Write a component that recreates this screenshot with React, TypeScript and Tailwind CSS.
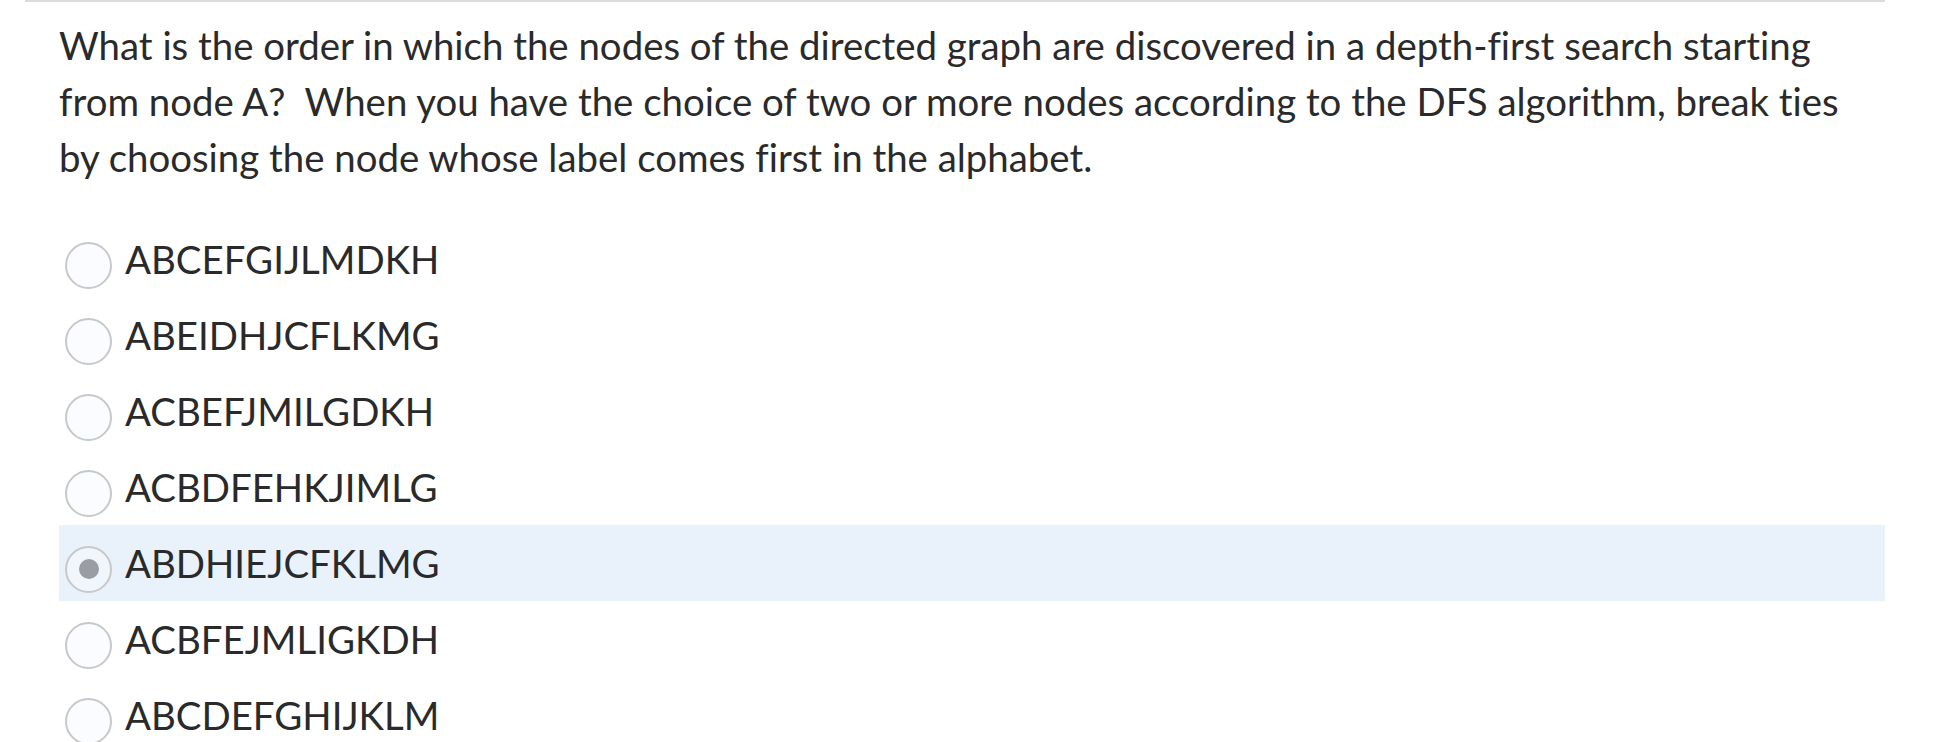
import React from "react";

const options = [
  "ABCEFGIJLMDKH",
  "ABEIDHJCFLKMG",
  "ACBEFJMILGDKH",
  "ACBDFEHKJIMLG",
  "ABDHIEJCFKLMG",
  "ACBFEJMLIGKDH",
  "ABCDEFGHIJKLM",
];

export default function App() {
  const selected = 4;
  return (
    <div
      className="w-[1938px] h-[742px] overflow-hidden bg-white [font-variant-ligatures:none]"
      style={{ fontFamily: "Lato, 'Noto Sans', sans-serif" }}
    >
      <div className="ml-[25px] w-[1860px] h-[2px] bg-[#dcdcdc]" />
      <div className="ml-[59px] w-[1826px]">
        <p className="pt-[15px] text-[38.4px] leading-[56px] text-[#2a2a2a] whitespace-nowrap">
          What is the order in which the nodes of the directed graph are discovered in a depth-first search starting
          <br />
          from node A?&nbsp; When you have the choice of two or more nodes according to the DFS algorithm, break ties
          <br />
          by choosing the node whose label comes first in the alphabet.
        </p>
        <div className="mt-[36px] flex flex-col">
          {options.map((o, i) => (
            <label
              key={o}
              className={`flex h-[76px] items-center ${i === selected ? "bg-[#e9f1fb]" : ""}`}
            >
              <span
                className={`ml-[6px] mt-[12px] flex h-[47px] w-[47px] shrink-0 items-center justify-center rounded-full border-2 border-[#c8c8c8] ${
                  i === selected ? "bg-[#f1f6fc]" : "bg-[#fafcff]"
                }`}
              >
                {i === selected && <span className="h-[20px] w-[20px] rounded-full bg-[#9a9ea4]" />}
              </span>
              <span className="ml-[13px] text-[38.4px] leading-none text-[#2a2a2a]">{o}</span>
            </label>
          ))}
        </div>
      </div>
    </div>
  );
}
